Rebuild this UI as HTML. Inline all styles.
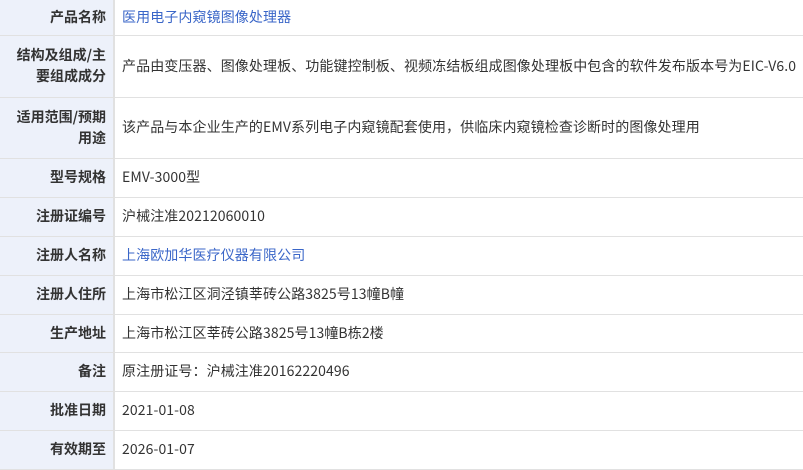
<!DOCTYPE html>
<html><head><meta charset="utf-8"><style>
html,body{margin:0;padding:0;background:#fff;}
body{width:803px;height:462px;overflow:hidden;font-family:"Noto Sans CJK SC","Liberation Sans",sans-serif;font-size:14px;color:#333;}
table{border-collapse:collapse;width:803px;position:absolute;top:0;left:0;}
td{border-bottom:1px solid #e1e1e1;padding:0 6px;line-height:21px;}
td.l{width:114px;box-sizing:border-box;background:#edf1fa;text-align:right;font-weight:bold;border-right:2px solid #e1e1e1;padding:0 7px 0 12px;}
td.v{padding-left:7px;letter-spacing:0.1px;}
a{color:#3a66c8;text-decoration:none;}
</style></head><body>
<table>
<tr style="height:35px"><td class="l">产品名称</td><td class="v"><a>医用电子内窥镜图像处理器</a></td></tr>
<tr style="height:62px"><td class="l">结构及组成/主要组成成分</td><td class="v">产品由变压器、图像处理板、功能键控制板、视频冻结板组成图像处理板中包含的软件发布版本号为EIC-V6.0</td></tr>
<tr style="height:61px"><td class="l">适用范围/预期用途</td><td class="v">该产品与本企业生产的EMV系列电子内窥镜配套使用，供临床内窥镜检查诊断时的图像处理用</td></tr>
<tr style="height:39px"><td class="l">型号规格</td><td class="v">EMV-3000型</td></tr>
<tr style="height:39px"><td class="l">注册证编号</td><td class="v">沪械注准20212060010</td></tr>
<tr style="height:39px"><td class="l">注册人名称</td><td class="v"><a>上海欧加华医疗仪器有限公司</a></td></tr>
<tr style="height:39px"><td class="l">注册人住所</td><td class="v">上海市松江区洞泾镇莘砖公路3825号13幢B幢</td></tr>
<tr style="height:38px"><td class="l">生产地址</td><td class="v">上海市松江区莘砖公路3825号13幢B栋2楼</td></tr>
<tr style="height:39px"><td class="l">备注</td><td class="v">原注册证号：沪械注准20162220496</td></tr>
<tr style="height:39px"><td class="l">批准日期</td><td class="v">2021-01-08</td></tr>
<tr style="height:39px"><td class="l">有效期至</td><td class="v">2026-01-07</td></tr>
</table>
</body></html>
